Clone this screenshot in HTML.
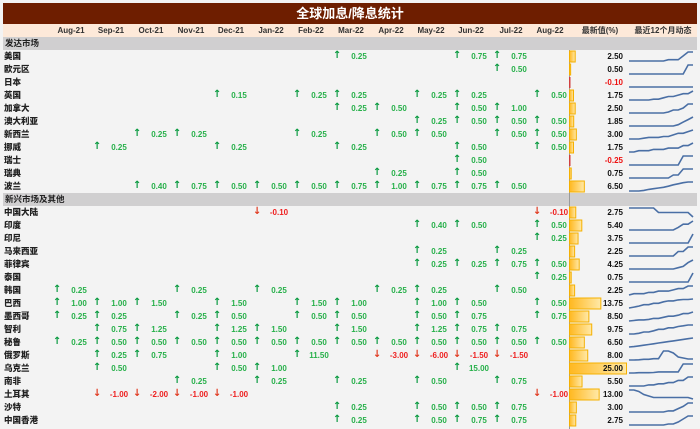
<!DOCTYPE html>
<html><head><meta charset="utf-8">
<style>
*{margin:0;padding:0;box-sizing:border-box}
body{width:700px;height:429px;background:#f3f3f3;position:relative;overflow:hidden;font-family:"Liberation Sans","Noto Sans CJK SC",sans-serif;font-weight:bold;font-size:8px;color:#222}
#title{position:absolute;left:3px;top:3px;width:694px;height:21px;background:#6e1e00;color:#fff;font-size:13px;text-align:center;line-height:21px;font-family:"Liberation Sans","Noto Sans CJK SC",sans-serif}
#hdr{position:absolute;left:3px;top:24px;width:694px;height:13px;background:#fde9d9;color:#333}
#hdr span{position:absolute;top:0;line-height:13px;text-align:center;width:40px}
.g{position:absolute;left:3px;width:694px;height:13px;background:#d0cfd0;line-height:13px;padding-left:2px;font-size:8.5px}
.r{position:absolute;left:0;width:700px;height:13px;line-height:13px}
.r b{position:absolute;left:4px;font-size:8.5px;color:#222}
.r i{position:absolute;font-style:normal;color:#0a9a40;font-family:"DejaVu Sans",sans-serif;font-weight:bold;font-size:10px;width:8px;text-align:center;line-height:12px}
.r i.d{color:#e03a20}
.r em{position:absolute;font-style:normal;color:#27b04a;width:26px;text-align:center}
.r em.d{color:#ee2020}
.r u{position:absolute;left:590px;width:33px;text-align:right;text-decoration:none;color:#111;z-index:2}
.r u.n{color:#ee1010}
.m0{left:53px}.m1{left:93px}.m2{left:133px}.m3{left:173px}.m4{left:213px}.m5{left:253px}.m6{left:293px}.m7{left:333px}.m8{left:373px}.m9{left:413px}.m10{left:453px}.m11{left:493px}.m12{left:533px}
em.m0{left:66px}em.m1{left:106px}em.m2{left:146px}em.m3{left:186px}em.m4{left:226px}em.m5{left:266px}em.m6{left:306px}em.m7{left:346px}em.m8{left:386px}em.m9{left:426px}em.m10{left:466px}em.m11{left:506px}em.m12{left:546px}
#sep{position:absolute;left:569px;top:50px;width:1px;height:379px;background:#9a9a9a}
svg{position:absolute;left:0;top:0}
</style></head><body>
<div id="title">全球加息/降息统计</div>
<div id="hdr">
<span style="left:48px">Aug-21</span><span style="left:88px">Sep-21</span><span style="left:128px">Oct-21</span><span style="left:168px">Nov-21</span><span style="left:208px">Dec-21</span><span style="left:248px">Jan-22</span><span style="left:288px">Feb-22</span><span style="left:328px">Mar-22</span><span style="left:368px">Apr-22</span><span style="left:408px">May-22</span><span style="left:448px">Jun-22</span><span style="left:488px">Jul-22</span><span style="left:527px">Aug-22</span><span style="left:567px;width:60px">最新值(%)</span><span style="left:627px;width:66px">最近12个月动态</span>
</div>
<div class="g" style="top:37px">发达市场</div>
<div class="g" style="top:193px">新兴市场及其他</div>
<div id="sep"></div>
<svg id="gfx" width="700" height="429"></svg>

<div class="r" style="top:50px"><b>美国</b><i class="m7">↑</i><em class="m7">0.25</em><i class="m10">↑</i><em class="m10">0.75</em><i class="m11">↑</i><em class="m11">0.75</em><u>2.50</u></div>
<div class="r" style="top:63px"><b>欧元区</b><i class="m11">↑</i><em class="m11">0.50</em><u>0.50</u></div>
<div class="r" style="top:76px"><b>日本</b><u class="n">-0.10</u></div>
<div class="r" style="top:89px"><b>英国</b><i class="m4">↑</i><em class="m4">0.15</em><i class="m6">↑</i><em class="m6">0.25</em><i class="m7">↑</i><em class="m7">0.25</em><i class="m9">↑</i><em class="m9">0.25</em><i class="m10">↑</i><em class="m10">0.25</em><i class="m12">↑</i><em class="m12">0.50</em><u>1.75</u></div>
<div class="r" style="top:102px"><b>加拿大</b><i class="m7">↑</i><em class="m7">0.25</em><i class="m8">↑</i><em class="m8">0.50</em><i class="m10">↑</i><em class="m10">0.50</em><i class="m11">↑</i><em class="m11">1.00</em><u>2.50</u></div>
<div class="r" style="top:115px"><b>澳大利亚</b><i class="m9">↑</i><em class="m9">0.25</em><i class="m10">↑</i><em class="m10">0.50</em><i class="m11">↑</i><em class="m11">0.50</em><i class="m12">↑</i><em class="m12">0.50</em><u>1.85</u></div>
<div class="r" style="top:128px"><b>新西兰</b><i class="m2">↑</i><em class="m2">0.25</em><i class="m3">↑</i><em class="m3">0.25</em><i class="m6">↑</i><em class="m6">0.25</em><i class="m8">↑</i><em class="m8">0.50</em><i class="m9">↑</i><em class="m9">0.50</em><i class="m11">↑</i><em class="m11">0.50</em><i class="m12">↑</i><em class="m12">0.50</em><u>3.00</u></div>
<div class="r" style="top:141px"><b>挪威</b><i class="m1">↑</i><em class="m1">0.25</em><i class="m4">↑</i><em class="m4">0.25</em><i class="m7">↑</i><em class="m7">0.25</em><i class="m10">↑</i><em class="m10">0.50</em><i class="m12">↑</i><em class="m12">0.50</em><u>1.75</u></div>
<div class="r" style="top:154px"><b>瑞士</b><i class="m10">↑</i><em class="m10">0.50</em><u class="n">-0.25</u></div>
<div class="r" style="top:167px"><b>瑞典</b><i class="m8">↑</i><em class="m8">0.25</em><i class="m10">↑</i><em class="m10">0.50</em><u>0.75</u></div>
<div class="r" style="top:180px"><b>波兰</b><i class="m2">↑</i><em class="m2">0.40</em><i class="m3">↑</i><em class="m3">0.75</em><i class="m4">↑</i><em class="m4">0.50</em><i class="m5">↑</i><em class="m5">0.50</em><i class="m6">↑</i><em class="m6">0.50</em><i class="m7">↑</i><em class="m7">0.75</em><i class="m8">↑</i><em class="m8">1.00</em><i class="m9">↑</i><em class="m9">0.75</em><i class="m10">↑</i><em class="m10">0.75</em><i class="m11">↑</i><em class="m11">0.50</em><u>6.50</u></div>

<div class="r" style="top:206px"><b>中国大陆</b><i class="d m5">↓</i><em class="d m5">-0.10</em><i class="d m12">↓</i><em class="d m12">-0.10</em><u>2.75</u></div>
<div class="r" style="top:219px"><b>印度</b><i class="m9">↑</i><em class="m9">0.40</em><i class="m10">↑</i><em class="m10">0.50</em><i class="m12">↑</i><em class="m12">0.50</em><u>5.40</u></div>
<div class="r" style="top:232px"><b>印尼</b><i class="m12">↑</i><em class="m12">0.25</em><u>3.75</u></div>
<div class="r" style="top:245px"><b>马来西亚</b><i class="m9">↑</i><em class="m9">0.25</em><i class="m11">↑</i><em class="m11">0.25</em><u>2.25</u></div>
<div class="r" style="top:258px"><b>菲律宾</b><i class="m9">↑</i><em class="m9">0.25</em><i class="m10">↑</i><em class="m10">0.25</em><i class="m11">↑</i><em class="m11">0.75</em><i class="m12">↑</i><em class="m12">0.50</em><u>4.25</u></div>
<div class="r" style="top:271px"><b>泰国</b><i class="m12">↑</i><em class="m12">0.25</em><u>0.75</u></div>
<div class="r" style="top:284px"><b>韩国</b><i class="m0">↑</i><em class="m0">0.25</em><i class="m3">↑</i><em class="m3">0.25</em><i class="m5">↑</i><em class="m5">0.25</em><i class="m8">↑</i><em class="m8">0.25</em><i class="m9">↑</i><em class="m9">0.25</em><i class="m11">↑</i><em class="m11">0.50</em><u>2.25</u></div>
<div class="r" style="top:297px"><b>巴西</b><i class="m0">↑</i><em class="m0">1.00</em><i class="m1">↑</i><em class="m1">1.00</em><i class="m2">↑</i><em class="m2">1.50</em><i class="m4">↑</i><em class="m4">1.50</em><i class="m6">↑</i><em class="m6">1.50</em><i class="m7">↑</i><em class="m7">1.00</em><i class="m9">↑</i><em class="m9">1.00</em><i class="m10">↑</i><em class="m10">0.50</em><i class="m12">↑</i><em class="m12">0.50</em><u>13.75</u></div>
<div class="r" style="top:310px"><b>墨西哥</b><i class="m0">↑</i><em class="m0">0.25</em><i class="m1">↑</i><em class="m1">0.25</em><i class="m3">↑</i><em class="m3">0.25</em><i class="m4">↑</i><em class="m4">0.50</em><i class="m6">↑</i><em class="m6">0.50</em><i class="m7">↑</i><em class="m7">0.50</em><i class="m9">↑</i><em class="m9">0.50</em><i class="m10">↑</i><em class="m10">0.75</em><i class="m12">↑</i><em class="m12">0.75</em><u>8.50</u></div>
<div class="r" style="top:323px"><b>智利</b><i class="m1">↑</i><em class="m1">0.75</em><i class="m2">↑</i><em class="m2">1.25</em><i class="m4">↑</i><em class="m4">1.25</em><i class="m5">↑</i><em class="m5">1.50</em><i class="m7">↑</i><em class="m7">1.50</em><i class="m9">↑</i><em class="m9">1.25</em><i class="m10">↑</i><em class="m10">0.75</em><i class="m11">↑</i><em class="m11">0.75</em><u>9.75</u></div>
<div class="r" style="top:336px"><b>秘鲁</b><i class="m0">↑</i><em class="m0">0.25</em><i class="m1">↑</i><em class="m1">0.50</em><i class="m2">↑</i><em class="m2">0.50</em><i class="m3">↑</i><em class="m3">0.50</em><i class="m4">↑</i><em class="m4">0.50</em><i class="m5">↑</i><em class="m5">0.50</em><i class="m6">↑</i><em class="m6">0.50</em><i class="m7">↑</i><em class="m7">0.50</em><i class="m8">↑</i><em class="m8">0.50</em><i class="m9">↑</i><em class="m9">0.50</em><i class="m10">↑</i><em class="m10">0.50</em><i class="m11">↑</i><em class="m11">0.50</em><i class="m12">↑</i><em class="m12">0.50</em><u>6.50</u></div>
<div class="r" style="top:349px"><b>俄罗斯</b><i class="m1">↑</i><em class="m1">0.25</em><i class="m2">↑</i><em class="m2">0.75</em><i class="m4">↑</i><em class="m4">1.00</em><i class="m6">↑</i><em class="m6">11.50</em><i class="d m8">↓</i><em class="d m8">-3.00</em><i class="d m9">↓</i><em class="d m9">-6.00</em><i class="d m10">↓</i><em class="d m10">-1.50</em><i class="d m11">↓</i><em class="d m11">-1.50</em><u>8.00</u></div>
<div class="r" style="top:362px"><b>乌克兰</b><i class="m1">↑</i><em class="m1">0.50</em><i class="m4">↑</i><em class="m4">0.50</em><i class="m5">↑</i><em class="m5">1.00</em><i class="m10">↑</i><em class="m10">15.00</em><u>25.00</u></div>
<div class="r" style="top:375px"><b>南非</b><i class="m3">↑</i><em class="m3">0.25</em><i class="m5">↑</i><em class="m5">0.25</em><i class="m7">↑</i><em class="m7">0.25</em><i class="m9">↑</i><em class="m9">0.50</em><i class="m11">↑</i><em class="m11">0.75</em><u>5.50</u></div>
<div class="r" style="top:388px"><b>土耳其</b><i class="d m1">↓</i><em class="d m1">-1.00</em><i class="d m2">↓</i><em class="d m2">-2.00</em><i class="d m3">↓</i><em class="d m3">-1.00</em><i class="d m4">↓</i><em class="d m4">-1.00</em><i class="d m12">↓</i><em class="d m12">-1.00</em><u>13.00</u></div>
<div class="r" style="top:401px"><b>沙特</b><i class="m7">↑</i><em class="m7">0.25</em><i class="m9">↑</i><em class="m9">0.50</em><i class="m10">↑</i><em class="m10">0.50</em><i class="m11">↑</i><em class="m11">0.75</em><u>3.00</u></div>
<div class="r" style="top:414px"><b>中国香港</b><i class="m7">↑</i><em class="m7">0.25</em><i class="m9">↑</i><em class="m9">0.50</em><i class="m10">↑</i><em class="m10">0.75</em><i class="m11">↑</i><em class="m11">0.75</em><u>2.75</u></div>

<script>
(function(){
var svg=document.getElementById('gfx'),out='';
out+='<defs><linearGradient id="gr" x1="0" x2="1"><stop offset="0" stop-color="#ffb820"/><stop offset="1" stop-color="#ffe9a8"/></linearGradient></defs>';
document.querySelectorAll('.r').forEach(function(r){
 var top=parseInt(r.style.top),u=r.querySelector('u'),last=parseFloat(u.textContent);
 var ch=[0,0,0,0,0,0,0,0,0,0,0,0,0];
 r.querySelectorAll('em').forEach(function(e){var m=parseInt(e.className.match(/m(\d+)/)[1]);ch[m]+=parseFloat(e.textContent);});
 var s=ch.reduce(function(a,b){return a+b},0),c=last-s,vals=[c];
 for(var i=0;i<13;i++){c+=ch[i];vals.push(c);}
 if(last>0){var w=last*2.28;out+='<rect x="569.5" y="'+(top+1)+'" width="'+w+'" height="11" fill="url(#gr)" stroke="#f5b000" stroke-width="1"/>';}
 else out+='<rect x="569" y="'+(top+1)+'" width="1.5" height="11" fill="#d04040"/>';
 var mn=Math.min.apply(null,vals),mx=Math.max.apply(null,vals),rg=mx-mn||1,pts=[];
 for(var k=0;k<vals.length;k++){var x=629+k*64/13,y=top+11-(mx===mn?0:9*(vals[k]-mn)/rg);pts.push(x.toFixed(1)+','+y.toFixed(1));}
 out+='<polyline points="'+pts.join(' ')+'" fill="none" stroke="#4a6fa5" stroke-width="1.6"/>';
});
svg.innerHTML=out;
})();
</script>
</body></html>
